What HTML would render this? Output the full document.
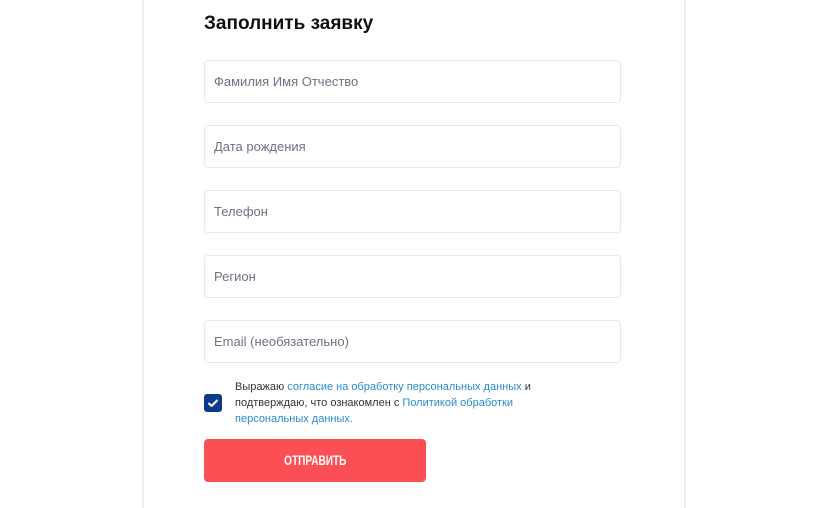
<!DOCTYPE html>
<html><head><meta charset="utf-8"><style>
html,body{margin:0;padding:0;background:#fff;width:825px;height:500px;overflow:hidden;font-family:"Liberation Sans",sans-serif;}
.card{position:absolute;left:142px;top:-2px;width:540px;height:510px;border-left:2px solid #eef0f4;border-right:2px solid #eef0f4;}
h1{position:absolute;left:204px;top:13px;margin:0;font-size:19px;font-weight:bold;color:#111;}
.in{position:absolute;left:204px;width:415px;height:41px;border:1.5px solid #e6eaf0;border-radius:4px;box-sizing:content-box;}
.in span{position:absolute;left:9px;top:13px;font-size:13px;color:#6b7380;}
.chk{position:absolute;left:204px;top:394px;width:18px;height:18px;background:#0d3b8c;border-radius:3px;}
.txt{position:absolute;left:235px;top:379px;font-size:11px;line-height:16px;color:#333;width:310px;}
.txt a{color:#2a8ad0;text-decoration:none;}
.btn{position:absolute;left:204px;top:439px;width:222px;height:43px;background:#f94f55;border-radius:4px;color:#fff;text-align:center;line-height:43px;}
.btn span{display:inline-block;font-weight:bold;font-size:14px;transform:scaleX(0.72);}
</style></head><body>
<div class="card"></div>
<h1>Заполнить заявку</h1>
<div class="in" style="top:60px"><span>Фамилия Имя Отчество</span></div>
<div class="in" style="top:125px"><span>Дата рождения</span></div>
<div class="in" style="top:190px"><span>Телефон</span></div>
<div class="in" style="top:255px"><span>Регион</span></div>
<div class="in" style="top:320px"><span>Email (необязательно)</span></div>
<div class="chk"><svg width="18" height="18" viewBox="0 0 18 18"><path d="M5 9.5l2.6 2.5L13 6.5" stroke="#fff" stroke-width="2" fill="none" stroke-linecap="round" stroke-linejoin="round"/></svg></div>
<div class="txt">Выражаю <a>согласие на обработку персональных данных</a> и подтверждаю, что ознакомлен с <a>Политикой обработки персональных данных.</a></div>
<div class="btn"><span>ОТПРАВИТЬ</span></div>
</body></html>
